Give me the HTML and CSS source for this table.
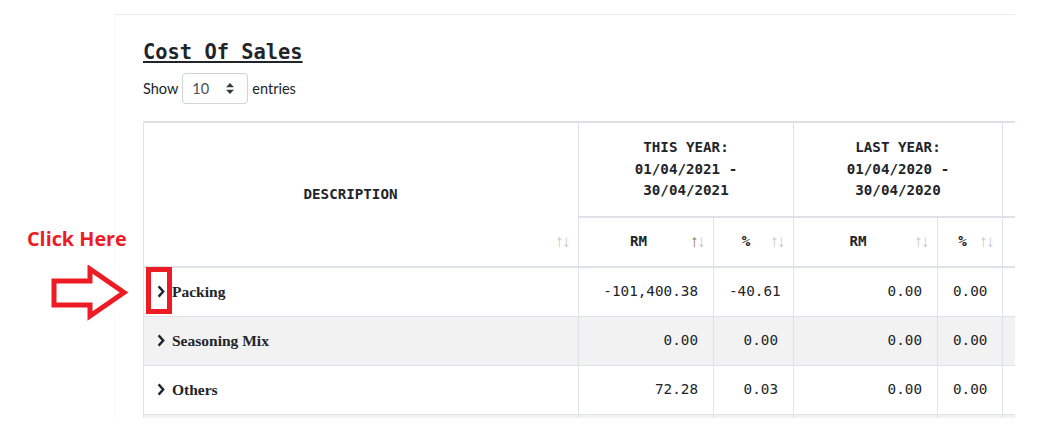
FILE: index.html
```html
<!DOCTYPE html>
<html lang="en">
<head>
<meta charset="utf-8">
<title>Cost Of Sales</title>
<link rel="stylesheet" href="styles.css">
</head>
<body>
<div class="page">
  <div class="card">
    <h2 class="title">Cost Of Sales</h2>
    <div class="length">
      <span>Show</span>
      <div class="select">
        <span>10</span>
        <svg class="caret" width="8" height="11" viewBox="0 0 8 11"><path d="M4 0 L8 4.3 L0 4.3 Z" fill="#343a40"/><path d="M0 6.7 L8 6.7 L4 11 Z" fill="#343a40"/></svg>
      </div>
      <span>entries</span>
    </div>
    <table class="report">
      <colgroup>
        <col class="c-desc"><col class="c-rm"><col class="c-pct"><col class="c-rm2"><col class="c-pct2"><col class="c-var"><col class="c-var2">
      </colgroup>
      <thead>
        <tr class="group-row">
          <th rowspan="2" class="desc-head">DESCRIPTION<span class="sorter"><span>↑</span><span>↓</span></span></th>
          <th colspan="2">THIS YEAR:<br>01/04/2021 -<br>30/04/2021</th>
          <th colspan="2">LAST YEAR:<br>01/04/2020 -<br>30/04/2020</th>
          <th colspan="2"></th>
        </tr>
        <tr class="sub-row">
          <th>RM<span class="sorter"><span class="on">↑</span><span>↓</span></span></th>
          <th>%<span class="sorter"><span>↑</span><span>↓</span></span></th>
          <th>RM<span class="sorter"><span>↑</span><span>↓</span></span></th>
          <th>%<span class="sorter"><span>↑</span><span>↓</span></span></th>
          <th></th>
          <th></th>
        </tr>
      </thead>
      <tbody>
        <tr>
          <td class="desc"><span class="desc-inner"><svg class="chev" width="8" height="13" viewBox="0 0 8 13"><path d="M1.6 1.4 L6.2 6.5 L1.6 11.6" fill="none" stroke="#1f2430" stroke-width="2.4"/></svg>Packing</span></td>
          <td class="num">-101,400.38</td><td class="num">-40.61</td><td class="num">0.00</td><td class="num">0.00</td><td class="num"></td><td class="num"></td>
        </tr>
        <tr class="striped">
          <td class="desc"><span class="desc-inner"><svg class="chev" width="8" height="13" viewBox="0 0 8 13"><path d="M1.6 1.4 L6.2 6.5 L1.6 11.6" fill="none" stroke="#1f2430" stroke-width="2.4"/></svg>Seasoning Mix</span></td>
          <td class="num">0.00</td><td class="num">0.00</td><td class="num">0.00</td><td class="num">0.00</td><td class="num"></td><td class="num"></td>
        </tr>
        <tr>
          <td class="desc"><span class="desc-inner"><svg class="chev" width="8" height="13" viewBox="0 0 8 13"><path d="M1.6 1.4 L6.2 6.5 L1.6 11.6" fill="none" stroke="#1f2430" stroke-width="2.4"/></svg>Others</span></td>
          <td class="num">72.28</td><td class="num">0.03</td><td class="num">0.00</td><td class="num">0.00</td><td class="num"></td><td class="num"></td>
        </tr>
        <tr class="striped">
          <td class="desc"></td>
          <td class="num"></td><td class="num"></td><td class="num"></td><td class="num"></td><td class="num"></td><td class="num"></td>
        </tr>
      </tbody>
    </table>
  </div>

  <div class="callout">Click Here</div>
  <svg class="pointer" width="90" height="64" viewBox="0 0 90 64">
    <polygon points="6,16 42,16 42,4 76,27.5 42,51 42,40 6,40" fill="none" stroke="#ed1c24" stroke-width="5" stroke-miterlimit="10"/>
  </svg>
  <div class="marker"></div>
</div>
</body>
</html>
```

FILE: styles.css
```css
* {
  box-sizing: border-box;
}

html,
body {
  margin: 0;
  padding: 0;
  background: #ffffff;
}

body {
  font-family: Lato, "Liberation Sans", sans-serif;
  color: #212529;
}

.page {
  position: relative;
  height: 442px;
  padding: 14px 0 0 114px;
}

.card {
  width: 901px;
  height: 404px;
  border-top: 1px solid #ececec;
  border-left: 1px solid #f8f8f8;
  overflow: hidden;
  padding: 25px 0 0 28px;
}

.title {
  margin: 0;
  font: 700 20.4px/24px "DejaVu Sans Mono", monospace;
  color: #212529;
  text-decoration: underline;
  text-decoration-thickness: 2px;
  text-underline-offset: 2px;
}

.length {
  display: flex;
  align-items: center;
  gap: 4px;
  margin-top: 9px;
  font-size: 14.5px;
  color: #212529;
}

.select {
  display: flex;
  align-items: center;
  justify-content: space-between;
  width: 66px;
  height: 31px;
  padding: 0 13px 0 9px;
  border: 1px solid #ced4da;
  border-radius: 4px;
  color: #495057;
  font-size: 14.5px;
}

.report {
  margin-top: 17px;
  width: 1009px;
  table-layout: fixed;
  border-collapse: collapse;
}

.c-desc { width: 435px; }
.c-rm { width: 135px; }
.c-pct { width: 80px; }
.c-rm2 { width: 144px; }
.c-pct2 { width: 65px; }
.c-var { width: 75px; }
.c-var2 { width: 75px; }

.report th,
.report td {
  border: 1px solid #dee2e6;
}

.report th {
  position: relative;
  padding: 14px 15px;
  font: 700 14.2px/21.5px "DejaVu Sans Mono", monospace;
  color: #212529;
  text-align: center;
  vertical-align: middle;
  white-space: nowrap;
}

.report .group-row th {
  border-top-width: 2px;
  border-bottom-width: 2px;
  height: 93px;
}

.report .sub-row th {
  padding: 13px 30px 14px 15px;
  border-bottom-width: 2px;
  height: 49px;
}

.report .desc-head {
  padding-right: 36px;
}

.sorter {
  position: absolute;
  right: 9px;
  bottom: 16px;
  display: flex;
  font: 400 17px/17px "Liberation Sans", sans-serif;
  letter-spacing: -1.5px;
  color: #c6c6c6;
}

.sorter .on {
  color: #8a6d3b;
}

.report td {
  height: 49px;
  padding: 0 15px;
  vertical-align: middle;
  white-space: nowrap;
}

.report tr.striped td {
  background: #f2f2f2;
}

.report .num {
  text-align: right;
  font: 400 14.3px/21px "DejaVu Sans Mono", monospace;
  color: #212529;
}

.report .desc {
  padding-left: 13px;
  font: 700 15.5px/21px "Liberation Serif", serif;
  color: #212529;
}

.desc-inner {
  display: inline-flex;
  align-items: center;
  gap: 7px;
}

.chev {
  display: block;
}

.callout {
  position: absolute;
  left: 27px;
  top: 226px;
  font: 700 19.8px/26px "Open Sans", sans-serif;
  color: #ed1c24;
}

.pointer {
  position: absolute;
  left: 48px;
  top: 265px;
}

.marker {
  position: absolute;
  left: 146px;
  top: 267px;
  width: 26px;
  height: 47px;
  border: 5px solid #ed1c24;
}
```
